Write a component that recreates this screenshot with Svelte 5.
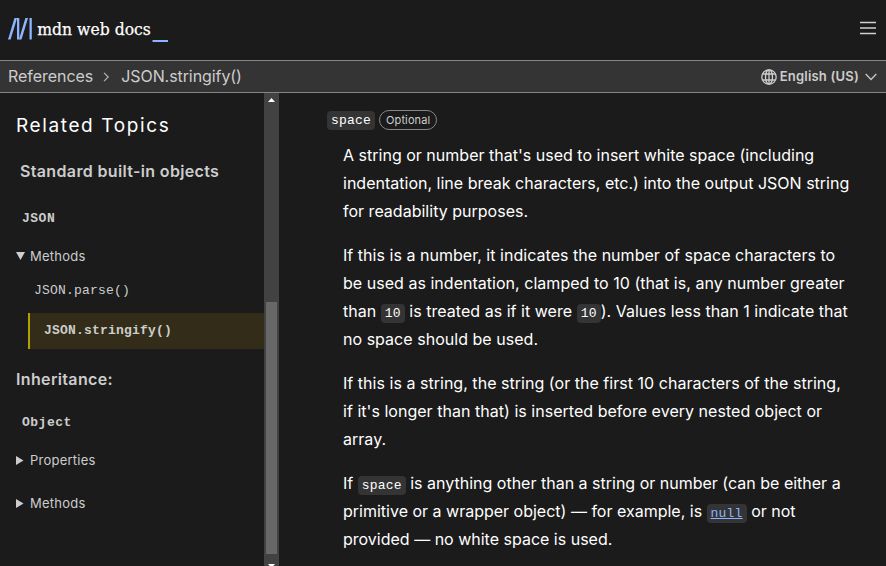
<script>
  const openMethods = [
    { name: 'JSON.parse()', current: false },
    { name: 'JSON.stringify()', current: true }
  ];
</script>

<div class="page">
  <header class="top">
    <svg class="logo" width="170" height="32" viewBox="0 0 170 32" aria-label="MDN Web Docs">
      <g fill="#8cb4ff">
        <path d="M6.500 4h2.600L2.600 25.500H0z" />
        <path d="M9 4h2.300v21.500H9z" />
        <path d="M17.400 4H20l-6.500 21.500h-2.600z" />
        <path d="M21.500 4h2.300v21.500h-2.300z" />
        <path d="M144.500 26H160v2h-15.500z" />
      </g>
      <text x="29.300" y="20.500" textLength="113.500" lengthAdjust="spacingAndGlyphs">mdn web docs</text>
    </svg>
    <svg class="burger" width="16" height="14" viewBox="0 0 16 14" aria-label="Menu">
      <path d="M0 1.500h16M0 7h16M0 12.500h16" stroke="#d0d0d0" stroke-width="1.600" />
    </svg>
  </header>

  <nav class="crumbs">
    <span class="crumb">References</span>
    <svg class="sep" width="8" height="10" viewBox="0 0 8 10"><path d="M1 .8l4.200 4.200L1 9.200" fill="none" stroke="#b3b3b3" stroke-width="1.200" /></svg>
    <span class="crumb page-name">JSON.stringify()</span>
    <div class="language">
      <svg width="16" height="16" viewBox="0 0 16 16" fill="none" stroke="#cdcdcd" stroke-width="1.300">
        <circle cx="8" cy="8" r="7.200" />
        <ellipse cx="8" cy="8" rx="3.500" ry="7.200" />
        <path d="M8 1v14M2 5h12M2 11h12" />
      </svg>
      <b>English (US)</b>
      <svg class="chev" width="12" height="8" viewBox="0 0 12 8"><path d="M.7 1L6 6.500 11.300 1" fill="none" stroke="#c4c4c4" stroke-width="1.400" /></svg>
    </div>
  </nav>

  <div class="body">
    <aside>
      <h2>Related Topics</h2>
      <h3 class="standard">Standard built-in objects</h3>
      <code class="object">JSON</code>
      <div class="summary open"><svg width="10" height="9"><path d="M0 0h9L4.500 8z" fill="#cdcdcd" /></svg>Methods</div>
      <ul>
        {#each openMethods as method}
          <li class:current={method.current}><code>{method.name}</code></li>
        {/each}
      </ul>
      <h3 class="inherit">Inheritance:</h3>
      <code class="object second">Object</code>
      <div class="summary props"><svg width="10" height="9"><path d="M0 0l7.500 4.500L0 9z" fill="#cdcdcd" /></svg>Properties</div>
      <div class="summary last"><svg width="10" height="9"><path d="M0 0l7.500 4.500L0 9z" fill="#cdcdcd" /></svg>Methods</div>
    </aside>
    <div class="scroll">
      <svg class="up" width="7" height="4"><path d="M3.500 0L7 4H0z" fill="#fff" /></svg>
      <div class="thumb"></div>
      <svg class="down" width="7" height="4"><path d="M0 0h7L3.500 4z" fill="#fff" /></svg>
    </div>
    <main>
      <div class="term"><code>space</code><span class="badge">Optional</span></div>
      <p class="first">A string or number that's used to insert white space (including<br />indentation, line break characters, etc.) into the output JSON string<br />for readability purposes.</p>
      <p class="number">If this is a number, it indicates the number of space characters to<br />be used as indentation, clamped to 10 (that is, any number greater<br />than <code>10</code> is treated as if it were <code>10</code>). Values less than 1 indicate that<br />no space should be used.</p>
      <p class="string">If this is a string, the string (or the first 10 characters of the string,<br />if it's longer than that) is inserted before every nested object or<br />array.</p>
      <p>If <code>space</code> is anything other than a string or number (can be either a<br />primitive or a wrapper object) — for example, is <code class="link">null</code> or not<br />provided — no white space is used.</p>
    </main>
  </div>
</div>

<style>
  :global(body) { margin: 0; background: #1b1b1b; overflow: hidden; }
  .page { width: 886px; height: 566px; overflow: hidden; display: flex; flex-direction: column; background: #1b1b1b; color: #fff; font-family: Inter, sans-serif; font-optical-sizing: none; }
  code { font-family: "Liberation Mono", monospace; letter-spacing: .2px; }
  svg { display: block; flex: none; }
  .top { height: 60px; flex: none; display: flex; justify-content: space-between; padding: 14px 10px 0 8px; box-sizing: border-box; }
  .logo text { font: 17px "DejaVu Serif", serif; fill: #fff; stroke: #fff; stroke-width: .25px; }
  .burger { margin-top: 7px; }
  .crumbs { height: 33px; flex: none; box-sizing: border-box; display: flex; align-items: center; padding: 0 9px 0 8px; background: #343434; border-top: 1px solid #858585; border-bottom: 1px solid #858585; color: #cdcdcd; }
  .crumb { font-size: 16px; line-height: 20px; padding-bottom: 2px; letter-spacing: -.04px; }
  .page-name { letter-spacing: -.08px; }
  .sep { margin: 0 10px; }
  .language { display: flex; align-items: center; margin-left: auto; font-size: 13px; }
  .language b { font-weight: 600; margin: 0 6px 0 3px; letter-spacing: .2px; line-height: 16px; padding-bottom: 2px; }
  .body { flex: 1; min-height: 0; display: flex; }
  aside { width: 264px; flex: none; box-sizing: border-box; padding: 21px 0 0 16px; color: #cdcdcd; }
  h2 { margin: 0; font-size: 19px; line-height: 24px; font-weight: 400; letter-spacing: 1.620px; color: #fff; }
  h3 { margin: 0; font-size: 16px; line-height: 20px; font-weight: 600; letter-spacing: .35px; }
  .standard { margin: 23px 0 0 4px; }
  .object { display: block; font-weight: 700; font-size: 13px; line-height: 16px; letter-spacing: .5px; margin: 30px 0 0 6px; }
  .summary { display: flex; align-items: center; gap: 4px; font-size: 13px; line-height: 16px; letter-spacing: .23px; }
  .open { margin-top: 21px; }
  ul { list-style: none; margin: 18px 0 0; padding: 0; }
  li { font-size: 13px; line-height: 18px; height: 18px; padding-left: 18px; }
  li code { display: block; }
  .current { height: 36px; line-height: 35px; margin: 13px 0 0 12px; padding-left: 14px; border-left: 2px solid #afa100; background: #332c18; font-weight: 700; }
  .inherit { margin-top: 20px; }
  .second { margin-top: 26px; }
  .props { margin-top: 21px; }
  .last { margin-top: 27px; }
  .scroll { width: 15px; flex: none; background: #424242; display: flex; flex-direction: column; align-items: center; }
  .up { margin-top: 5px; }
  .thumb { width: 11px; height: 252px; margin-top: 200px; background: #686868; flex: none; }
  .down { margin-top: 10px; }
  main { flex: 1; padding: 16px 0 0 48px; }
  .term { display: flex; align-items: center; height: 22px; gap: 4px; }
  main code { font-size: 13px; background: #343434; border-radius: 4px; padding: 2px 4px; line-height: 15px; }
  .badge { box-sizing: border-box; height: 20px; border: 1px solid #858585; border-radius: 10px; padding: 0 6px; font-size: 11px; line-height: 18px; letter-spacing: .12px; color: #cdcdcd; }
  p { margin: 10px 0 0 16px; font-size: 16px; line-height: 28px; white-space: nowrap; }
  p + p { margin-top: 16px; }
  .first { letter-spacing: .01px; }
  .number { letter-spacing: .03px; }
  .string { letter-spacing: .03px; }
  .link { color: #8cb4ff; text-decoration: underline; }
</style>
